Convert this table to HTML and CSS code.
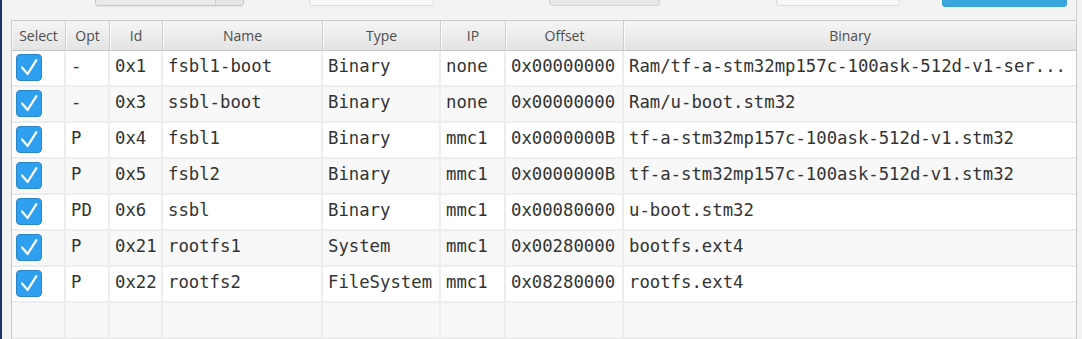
FILE: index.html
```html
<!DOCTYPE html>
<html lang="en">

<head>
  <meta charset="UTF-8">
  <title>Partition list</title>
  <link rel="stylesheet" href="styles.css">
</head>

<body>
  <div class="window">
    <div class="toolbar">
      <div class="combo"><span class="combo-arrow"></span></div>
      <div class="field field-a"></div>
      <div class="btn"></div>
      <div class="field field-b"></div>
      <div class="btn btn-primary"></div>
    </div>

    <table class="parts">
      <colgroup>
        <col class="c-select">
        <col class="c-opt">
        <col class="c-id">
        <col class="c-name">
        <col class="c-type">
        <col class="c-ip">
        <col class="c-offset">
        <col class="c-binary">
      </colgroup>
      <thead>
        <tr>
          <th>Select</th>
          <th>Opt</th>
          <th>Id</th>
          <th>Name</th>
          <th>Type</th>
          <th>IP</th>
          <th>Offset</th>
          <th>Binary</th>
        </tr>
      </thead>
      <tbody>
        <tr>
          <td><span class="check"><svg viewBox="0 0 26 27"><path d="M5.5 13.5L11.5 20.5L21 5.5"/></svg></span></td>
          <td>-</td><td>0x1</td><td>fsbl1-boot</td><td>Binary</td><td>none</td><td>0x00000000</td>
          <td>Ram/tf-a-stm32mp157c-100ask-512d-v1-ser...</td>
        </tr>
        <tr>
          <td><span class="check"><svg viewBox="0 0 26 27"><path d="M5.5 13.5L11.5 20.5L21 5.5"/></svg></span></td>
          <td>-</td><td>0x3</td><td>ssbl-boot</td><td>Binary</td><td>none</td><td>0x00000000</td>
          <td>Ram/u-boot.stm32</td>
        </tr>
        <tr>
          <td><span class="check"><svg viewBox="0 0 26 27"><path d="M5.5 13.5L11.5 20.5L21 5.5"/></svg></span></td>
          <td>P</td><td>0x4</td><td>fsbl1</td><td>Binary</td><td>mmc1</td><td>0x0000000B</td>
          <td>tf-a-stm32mp157c-100ask-512d-v1.stm32</td>
        </tr>
        <tr>
          <td><span class="check"><svg viewBox="0 0 26 27"><path d="M5.5 13.5L11.5 20.5L21 5.5"/></svg></span></td>
          <td>P</td><td>0x5</td><td>fsbl2</td><td>Binary</td><td>mmc1</td><td>0x0000000B</td>
          <td>tf-a-stm32mp157c-100ask-512d-v1.stm32</td>
        </tr>
        <tr>
          <td><span class="check"><svg viewBox="0 0 26 27"><path d="M5.5 13.5L11.5 20.5L21 5.5"/></svg></span></td>
          <td>PD</td><td>0x6</td><td>ssbl</td><td>Binary</td><td>mmc1</td><td>0x00080000</td>
          <td>u-boot.stm32</td>
        </tr>
        <tr>
          <td><span class="check"><svg viewBox="0 0 26 27"><path d="M5.5 13.5L11.5 20.5L21 5.5"/></svg></span></td>
          <td>P</td><td>0x21</td><td>rootfs1</td><td>System</td><td>mmc1</td><td>0x00280000</td>
          <td>bootfs.ext4</td>
        </tr>
        <tr>
          <td><span class="check"><svg viewBox="0 0 26 27"><path d="M5.5 13.5L11.5 20.5L21 5.5"/></svg></span></td>
          <td>P</td><td>0x22</td><td>rootfs2</td><td>FileSystem</td><td>mmc1</td><td>0x08280000</td>
          <td>rootfs.ext4</td>
        </tr>
        <tr class="empty">
          <td></td><td></td><td></td><td></td><td></td><td></td><td></td><td></td>
        </tr>
        <tr class="empty">
          <td></td><td></td><td></td><td></td><td></td><td></td><td></td><td></td>
        </tr>
      </tbody>
    </table>
  </div>
</body>

</html>
```

FILE: styles.css
```css
* {
  margin: 0;
  padding: 0;
  box-sizing: border-box;
}

html,
body {
  height: 100%;
  overflow: hidden;
}

body {
  background: #f3f3f3;
  font-family: 'Open Sans', 'Liberation Sans', sans-serif;
  color: #333;
}

.window {
  height: 100%;
  border-left: 2px solid #1d3466;
  border-right: 1px solid #d0d0d0;
  margin-right: 5px;
}

/* toolbar above the table, only its lower edge is in view */
.toolbar {
  display: flex;
  align-items: flex-end;
  height: 7px;
  padding-left: 93px;
}

.combo,
.field,
.btn {
  flex: none;
  height: 30px;
  border-radius: 3px;
}

.combo {
  position: relative;
  width: 149px;
  margin-bottom: 1px;
  background: linear-gradient(#f4f4f4, #e8e8e8);
  border: 1px solid #c9c9c9;
  box-shadow: 0 1px 1px rgba(0, 0, 0, 0.06);
}

.combo-arrow {
  position: absolute;
  top: 0;
  right: 0;
  bottom: 0;
  width: 28px;
  border-left: 1px solid #d2d2d2;
  background: #e6e6e6;
  border-radius: 0 3px 3px 0;
}

.field {
  margin-bottom: 1px;
  background: #f8f8f8;
  border: 1px solid #dcdcdc;
}

.field-a {
  width: 125px;
  margin-left: 65px;
}

.field-b {
  width: 124px;
  margin-left: 116px;
}

.btn {
  width: 111px;
  margin-left: 115px;
  margin-bottom: 1px;
  background: linear-gradient(#f0f0f0, #e6e6e6);
  border: 1px solid #d4d4d4;
}

.btn-primary {
  width: 125px;
  margin-left: 42px;
  margin-bottom: 0;
  background: #39a7dd;
  border: 1px solid #3a9fd2;
}

/* partition table */
.parts {
  margin: 13px 0 0 9px;
  width: 1065px;
  table-layout: fixed;
  border-collapse: separate;
  border-spacing: 0;
  border-left: 1px solid #c9c9c9;
  border-top: 1px solid #c9c9c9;
  border-right: 1px solid #c9c9c9;
  background: #fff;
}

.c-select { width: 54px; }
.c-opt { width: 44px; }
.c-id { width: 53px; }
.c-name { width: 160px; }
.c-type { width: 118px; }
.c-ip { width: 65px; }
.c-offset { width: 118px; }
.c-binary { width: 452px; }

.parts th {
  height: 30px;
  padding: 0 4px;
  font-size: 14px;
  font-weight: 400;
  color: #4d4d4d;
  text-align: center;
  background: linear-gradient(#f5f5f5, #e3e3e3);
  border-right: 1px solid #cdcdcd;
  border-bottom: 1px solid #c6c6c6;
  box-shadow: inset 1px 0 0 #fafafa;
}

.parts th:last-child {
  border-right: none;
}

.parts td {
  height: 36px;
  padding: 0 5px 5px;
  font-family: 'DejaVu Sans Mono', 'Liberation Mono', monospace;
  font-size: 17.3px;
  color: #333;
  white-space: nowrap;
  overflow: hidden;
  vertical-align: middle;
  border-right: 2px solid #ededed;
  border-bottom: 2px solid #ededed;
}

.parts td:first-child {
  padding: 0 0 2px 4px;
}

.parts td:last-child {
  border-right: none;
}

.parts tbody tr:nth-child(even) td {
  background: #f8f8f8;
}

.check {
  display: block;
  width: 26px;
  height: 27px;
  background: #2f9ff0;
  border: 1px solid #2b86c8;
  border-radius: 4px;
}

.check svg {
  display: block;
  width: 24px;
  height: 25px;
  fill: none;
  stroke: #fff;
  stroke-width: 2.4;
  stroke-linecap: round;
  stroke-linejoin: round;
}
```
